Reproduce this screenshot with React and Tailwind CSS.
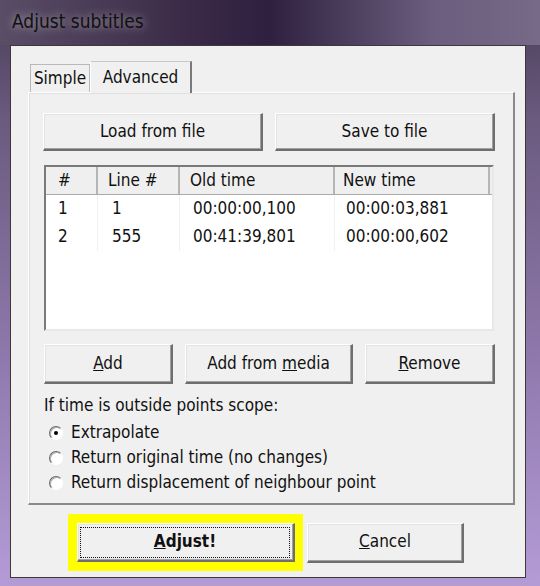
import React from "react";

const font = { fontFamily: '"DejaVu Sans Condensed", "DejaVu Sans", sans-serif' };

function Btn({ children, className = "" }) {
  return (
    <div
      className={
        "flex items-center justify-center bg-[#f0f0f0] border-t border-l border-t-[#ffffff] border-l-[#ffffff] border-r-2 border-b-2 border-r-[#6e6e6e] border-b-[#6e6e6e] shadow-[inset_-1px_-1px_0_#a0a0a0,inset_1px_1px_0_#e3e3e3] text-[17px] text-[#111] " +
        className
      }
    >
      {children}
    </div>
  );
}

function Radio({ checked, label }) {
  return (
    <div className="flex items-center h-[25px]">
      <div className="w-[14px] h-[14px] rounded-full border border-t-[#6a6a6a] border-l-[#6a6a6a] border-r-[#fff] border-b-[#fff] bg-white flex items-center justify-center ml-[5px] mr-[8px] shadow-[inset_1px_1px_0_#b0b0b0]">
        {checked && <div className="w-[4px] h-[4px] rounded-full bg-black" />}
      </div>
      <span className="text-[17px] text-[#111]">{label}</span>
    </div>
  );
}

export default function App() {
  return (
    <div
      className="w-[540px] h-[586px] overflow-hidden relative bg-[linear-gradient(180deg,#4a3d58_0%,#6a5a7e_20%,#8e78ab_60%,#b49bd6_100%)]"
      style={font}
    >
      {/* title bar */}
      <div className="h-[45px] bg-[linear-gradient(90deg,#5a4d66_0%,#3a2a47_35%,#2f2040_50%,#6b5d7d_80%,#766a88_100%)] flex items-center pl-[12px]">
        <span className="text-[19px] text-[#111] [text-shadow:0_0_8px_rgba(255,255,255,0.55)] -mt-[2px]">
          Adjust subtitles
        </span>
      </div>
      {/* client area */}
      <div className="ml-[10px] w-[516px] h-[533px] border border-[#3a3a3a] bg-[#f0f0f0] flex flex-col">
        <div className="pl-[17px] pr-[11px] pt-[14px]">
          {/* tabs */}
          <div className="flex items-end h-[32px] relative z-10">
            <div className="ml-[2px] w-[60px] h-[28px] border border-b-0 border-[#b9b9b9] bg-[#f0f0f0] flex items-center justify-center text-[17px] text-[#111]">
              Simple
            </div>
            <div className="w-[102px] h-[32px] border border-b-0 border-t-[#c8c8c8] border-l-[#ffffff] border-r-2 border-r-[#7a7a7a] bg-[#f0f0f0] flex items-start justify-center pt-[3px] text-[17px] text-[#111] -mb-[1px]">
              Advanced
            </div>
          </div>
          {/* panel */}
          <div className="w-[487px] h-[413px] border border-[#d4d4d4] border-t-[#ffffff] border-l-[#ffffff] border-r-2 border-r-[#8a8a8a] border-b-2 border-b-[#8a8a8a] shadow-[inset_1px_1px_0_#e0e0e0] px-[14px] pt-[20px]">
            <div className="flex gap-[12px]">
              <Btn className="w-[220px] h-[38px]">Load from file</Btn>
              <Btn className="w-[220px] h-[38px]">Save to file</Btn>
            </div>
            {/* list */}
            <div className="mt-[14px] ml-[1px] w-[450px] h-[166px] border-2 border-t-[#7a7a7a] border-l-[#7a7a7a] border-r-[#e8e8e8] border-b-[#e8e8e8] bg-white text-[17px] text-[#111]">
              <div className="flex h-[28px] bg-[#efefef] border-b border-[#a9a9a9]">
                <div className="w-[52px] pl-[12px] flex items-center border-r-2 border-r-[#b5b5b5]">#</div>
                <div className="w-[82px] pl-[10px] flex items-center border-r-2 border-r-[#b5b5b5]">Line #</div>
                <div className="w-[155px] pl-[10px] flex items-center border-r-2 border-r-[#b5b5b5]">Old time</div>
                <div className="w-[155px] pl-[8px] flex items-center border-r-2 border-r-[#b5b5b5]">New time</div>
              </div>
              {[
                ["1", "1", "00:00:00,100", "00:00:03,881"],
                ["2", "555", "00:41:39,801", "00:00:00,602"],
              ].map((r, i) => (
                <div key={i} className="flex h-[28px]">
                  <div className="w-[52px] pl-[12px] flex items-center border-r border-[#f0f0f0]">{r[0]}</div>
                  <div className="w-[82px] pl-[14px] flex items-center border-r border-[#f0f0f0]">{r[1]}</div>
                  <div className="w-[155px] pl-[13px] flex items-center border-r border-[#f0f0f0]">{r[2]}</div>
                  <div className="w-[155px] pl-[11px] flex items-center">{r[3]}</div>
                </div>
              ))}
            </div>
            <div className="flex mt-[13px] ml-[1px]">
              <Btn className="w-[129px] h-[40px]">
                <span><u>A</u>dd</span>
              </Btn>
              <Btn className="w-[168px] h-[40px] ml-[12px]">
                <span>Add from <u>m</u>edia</span>
              </Btn>
              <Btn className="w-[130px] h-[40px] ml-[12px]">
                <span><u>R</u>emove</span>
              </Btn>
            </div>
            <div className="mt-[10px] ml-[1px] text-[17px] text-[#111] h-[24px] flex items-center">
              If time is outside points scope:
            </div>
            <div className="ml-[1px] mt-[2px] flex flex-col">
              <Radio checked label="Extrapolate" />
              <Radio label="Return original time (no changes)" />
              <Radio label="Return displacement of neighbour point" />
            </div>
          </div>
        </div>
        {/* bottom buttons */}
        <div className="flex items-center ml-[57px] mt-[9px]">
          <div className="w-[235px] h-[57px] bg-[#ffff00] flex items-center justify-center">
            <Btn className="w-[218px] h-[39px]">
              <div className="w-[210px] h-[31px] border border-dotted border-[#111] flex items-center justify-center font-bold">
                <span><u>A</u>djust!</span>
              </div>
            </Btn>
          </div>
          <Btn className="w-[157px] h-[40px] ml-[4px]">
            <span><u>C</u>ancel</span>
          </Btn>
        </div>
      </div>
    </div>
  );
}
